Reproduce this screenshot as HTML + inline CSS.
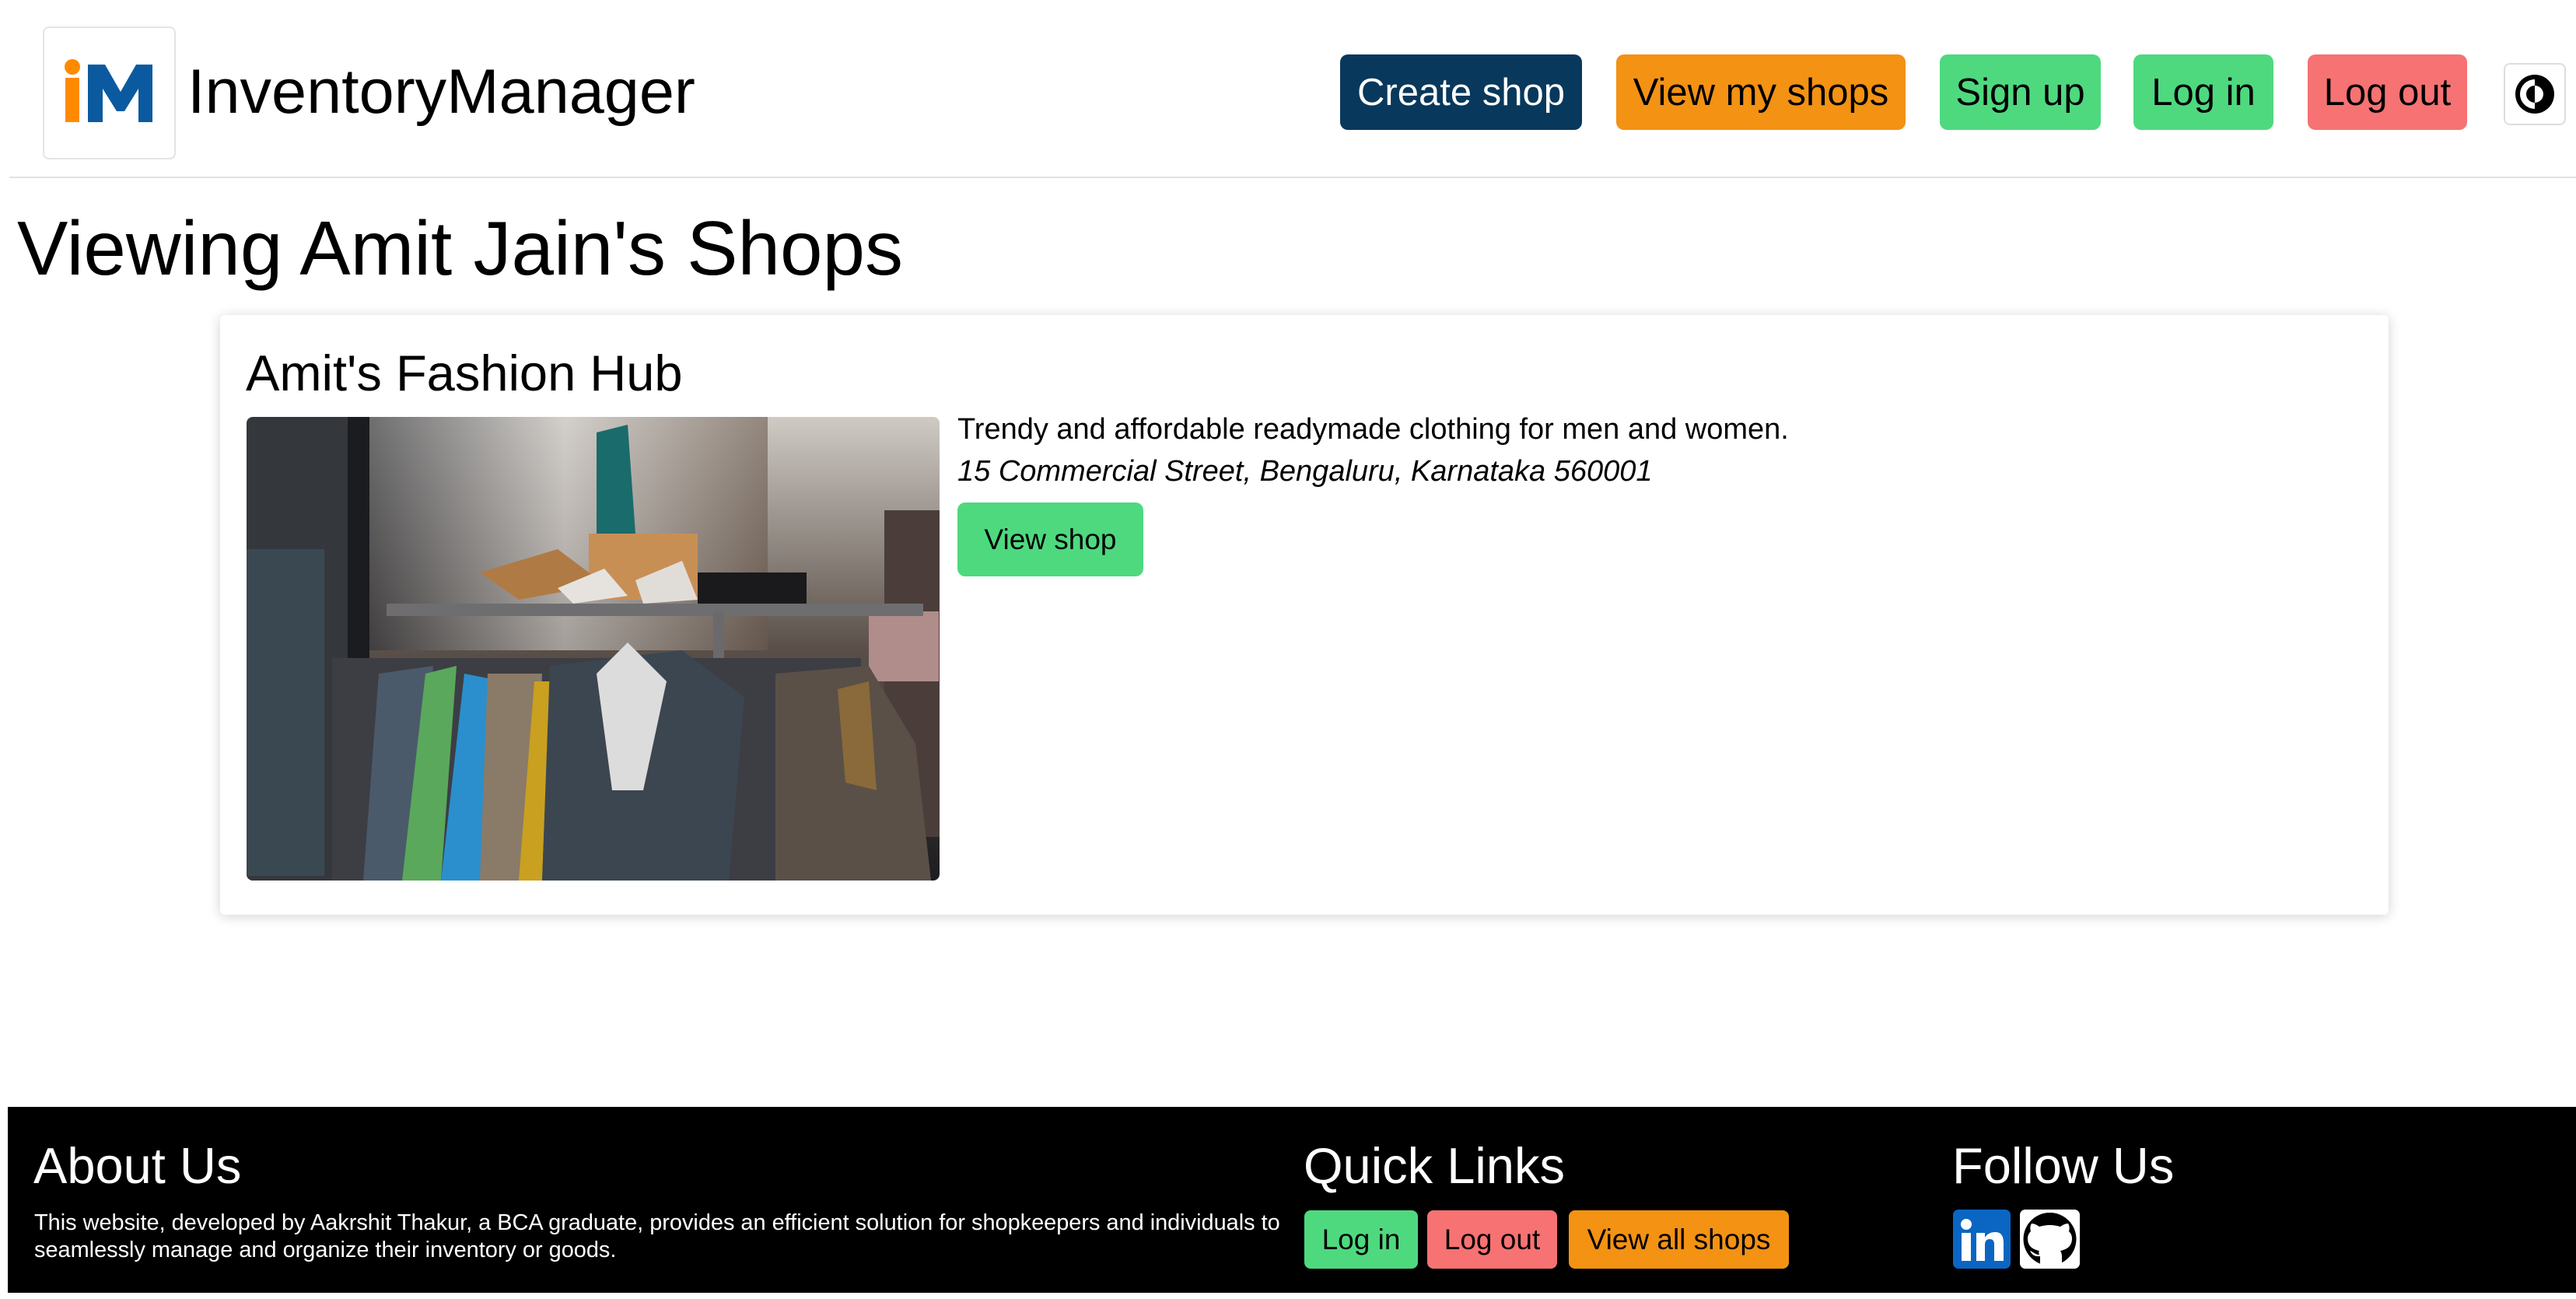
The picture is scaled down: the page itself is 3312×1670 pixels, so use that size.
<!DOCTYPE html>
<html><head><meta charset="utf-8"><style>
*{margin:0;padding:0;box-sizing:border-box}
body{width:3312px;height:1670px;background:#fff;font-family:"Liberation Sans",Arial,sans-serif;position:relative;overflow:hidden;color:#000}
.a{position:absolute;white-space:nowrap}
.btn{position:absolute;border-radius:10px;display:flex;align-items:center;justify-content:center;font-size:49px}
.fb{position:absolute;border-radius:8px;display:flex;align-items:center;justify-content:center;font-size:37px;color:#000}
</style></head><body>
<div class="a" style="left:55px;top:34px;width:171px;height:171px;border:2px solid #e4e4e4;border-radius:8px"></div>
<svg class="a" style="left:0;top:0" width="240" height="220">
<circle cx="93" cy="86" r="10" fill="#ff8a00"/>
<rect x="84" y="100" width="18" height="57" fill="#ff8a00"/>
<path d="M113 157 V83 H135 L155 118 L175 83 H196 V157 H178 V114 L160 143 H150 L132 114 V157 Z" fill="#0b5aa0"/>
</svg>
<div class="a" style="left:241px;top:68px;font-size:81px;line-height:100px">InventoryManager</div>

<div class="btn" style="left:1723px;top:70px;width:311px;height:97px;background:#08385c;color:#fff">Create shop</div>
<div class="btn" style="left:2078px;top:70px;width:372px;height:97px;background:#f39213">View my shops</div>
<div class="btn" style="left:2494px;top:70px;width:207px;height:97px;background:#4ed97f">Sign up</div>
<div class="btn" style="left:2743px;top:70px;width:180px;height:97px;background:#4ed97f">Log in</div>
<div class="btn" style="left:2967px;top:70px;width:205px;height:97px;background:#f77272">Log out</div>
<div class="a" style="left:3219px;top:81px;width:80px;height:80px;border:2px solid #ddd;border-radius:8px"></div>
<svg class="a" style="left:3219px;top:81px" width="80" height="80">
<circle cx="40" cy="40" r="25" fill="#000"/>
<path d="M40 21 A19 19 0 0 0 40 59 Z" fill="#fff"/>
<path d="M40 29 A11 11 0 0 0 40 51 Z" fill="#000"/>
<path d="M40 29 A11 11 0 0 1 40 51 Z" fill="#fff"/>
</svg>
<div class="a" style="left:12px;top:227px;width:3300px;height:2px;background:#dde1e6"></div>

<div class="a" style="left:22px;top:262px;font-size:98px;line-height:115px">Viewing Amit Jain's Shops</div>

<div class="a" style="left:283px;top:405px;width:2788px;height:771px;background:#fff;border-radius:6px;box-shadow:0 2px 16px rgba(0,0,0,0.18)"></div>
<div class="a" style="left:316px;top:440px;font-size:65px;line-height:80px">Amit's Fashion Hub</div>
<svg class="a" style="left:317px;top:536px;border-radius:8px" width="891" height="596" viewBox="0 0 891 596">
<defs><linearGradient id="bg" x1="0" y1="0" x2="0" y2="1"><stop offset="0" stop-color="#cfcac4"/><stop offset=".5" stop-color="#5a5049"/><stop offset="1" stop-color="#1d1c1f"/></linearGradient>
<linearGradient id="lt" x1="0" y1="0" x2="1" y2="0"><stop offset="0" stop-color="#2a2d33"/><stop offset=".5" stop-color="#d6d3d0"/><stop offset="1" stop-color="#6a5a4e"/></linearGradient></defs>
<rect width="891" height="596" fill="url(#bg)"/>
<rect x="150" y="0" width="520" height="300" fill="url(#lt)" opacity=".6"/>
<rect x="0" y="0" width="140" height="596" fill="#34383d"/>
<rect x="130" y="0" width="28" height="596" fill="#1b1c20"/>
<rect x="0" y="170" width="100" height="420" fill="#3a4852"/>
<rect x="820" y="120" width="71" height="420" fill="#4a3d3a"/>
<rect x="800" y="250" width="90" height="90" fill="#b08c8a"/>
<rect x="440" y="150" width="140" height="85" fill="#c88f55"/>
<path d="M450 20 L490 10 L500 150 L450 150Z" fill="#1a6b6b"/>
<path d="M300 200 L400 170 L460 215 L350 235Z" fill="#b07a44"/>
<path d="M400 220 L460 195 L490 230 L420 240Z" fill="#e6e3df"/>
<path d="M500 210 L560 185 L580 235 L510 240Z" fill="#e0ddd8"/>
<path d="M580 200 L720 200 L720 240 L580 240Z" fill="#1a1a1c"/>
<rect x="180" y="240" width="690" height="16" fill="#6e6e70"/>
<rect x="600" y="250" width="14" height="300" fill="#6a6a6c"/>
<rect x="110" y="310" width="680" height="286" fill="#3c3e44"/>
<path d="M170 330 L240 320 L220 596 L150 596Z" fill="#4a5a6a"/>
<path d="M230 330 L270 320 L250 596 L200 596Z" fill="#5aa85c"/>
<path d="M280 330 L330 340 L310 596 L250 596Z" fill="#2a8fcc"/>
<path d="M310 330 L380 330 L370 596 L300 596Z" fill="#8a7a68"/>
<path d="M370 340 L390 340 L380 596 L350 596Z" fill="#c9a020"/>
<path d="M390 320 L560 300 L640 360 L620 596 L380 596Z" fill="#3c4650"/>
<path d="M450 330 L490 290 L540 340 L510 480 L470 480Z" fill="#dcdcdc"/>
<path d="M680 330 L800 320 L860 420 L880 596 L680 596Z" fill="#5a5048"/>
<path d="M760 350 L800 340 L810 480 L770 470Z" fill="#8a6a3a"/>
</svg>
<div class="a" style="left:1231px;top:529px;font-size:38px;line-height:46px">Trendy and affordable readymade clothing for men and women.</div>
<div class="a" style="left:1231px;top:583px;font-size:38px;line-height:46px;font-style:italic">15 Commercial Street, Bengaluru, Karnataka 560001</div>
<div class="fb" style="left:1231px;top:646px;width:239px;height:95px;background:#4ed97f;border-radius:10px">View shop</div>

<div class="a" style="left:10px;top:1423px;width:3302px;height:239px;background:#000"></div>
<div class="a" style="left:43px;top:1461px;font-size:65px;line-height:76px;color:#fff">About Us</div>
<div class="a" style="left:44px;top:1555px;font-size:28.9px;line-height:35px;color:#fff">This website, developed by Aakrshit Thakur, a BCA graduate, provides an efficient solution for shopkeepers and individuals to<br>seamlessly manage and organize their inventory or goods.</div>
<div class="a" style="left:1676px;top:1461px;font-size:65px;line-height:76px;color:#fff">Quick Links</div>
<div class="fb" style="left:1677px;top:1556px;width:146px;height:75px;background:#4ed97f">Log in</div>
<div class="fb" style="left:1835px;top:1556px;width:167px;height:75px;background:#f77272">Log out</div>
<div class="fb" style="left:2017px;top:1556px;width:283px;height:75px;background:#f39213">View all shops</div>
<div class="a" style="left:2510px;top:1461px;font-size:65px;line-height:76px;color:#fff">Follow Us</div>
<svg class="a" style="left:2511px;top:1555px" width="170" height="77">
<rect x="0" y="0" width="74" height="76" rx="7" fill="#0a66c2"/>
<circle cx="17" cy="19" r="7" fill="#fff"/>
<rect x="11" y="30" width="12" height="36" fill="#fff"/>
<path d="M30 30 H41 V36 C44 31 49 29 54 29 C62 29 65 34 65 43 V66 H53 V45 C53 40 51 38 47 38 C43 38 41 41 41 45 V66 H30Z" fill="#fff"/>
<rect x="86" y="0" width="77" height="76" rx="7" fill="#fff"/>
<circle cx="124.5" cy="38" r="34" fill="#000"/>
<path d="M112 72 V60 C104 61 101 57 99 53 C103 54 105 58 111 58 C110 56 110 54 111 53 C101 51 96 46 96 37 C96 33 98 30 100 28 C99 25 99 21 101 18 C105 18 108 20 111 22 C115 21 119 20 124.5 20 C130 20 134 21 138 22 C141 20 144 18 148 18 C150 21 150 25 149 28 C151 30 153 33 153 37 C153 46 148 51 138 53 C139 55 140 57 140 60 V72Z" fill="#fff"/>
</svg>
</body></html>
